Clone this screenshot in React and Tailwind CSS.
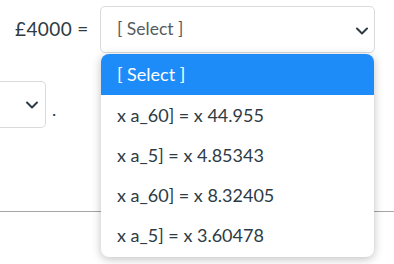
import { ChevronDown } from 'lucide-react'

const options = [
  'x a_60] = x 44.955',
  'x a_5] = x 4.85343',
  'x a_60] = x 8.32405',
  'x a_5] = x 3.60478',
]

export default function App() {
  return (
    <div className="relative h-[264px] w-[394px] overflow-hidden bg-white text-[#2d3b45]" style={{ fontFamily: 'Lato, "Noto Sans", sans-serif' }}>
      {/* top row */}
      <div className="flex items-center pt-[6px] pl-[15px]">
        <span className="w-[85px] text-[19px] tracking-[0.4px]">£4000 =</span>
        <div className="flex h-[47px] w-[275px] items-center justify-between rounded-[5px] border border-[#d7dbde] pl-[16px] pr-[2px]">
          <span className="text-[17.5px] text-[#555b60]">[ Select ]</span>
          <ChevronDown className="mt-[2px] h-[20px] w-[20px] text-[#2d3b45]" strokeWidth={2.4} />
        </div>
      </div>

      {/* second row, partly hidden */}
      <div className="mt-[28px] flex items-end">
        <div className="flex h-[47px] w-[46px] items-center justify-end rounded-r-[5px] border border-l-0 border-[#d7dbde] pr-[3px]">
          <ChevronDown className="h-[20px] w-[20px] text-[#2d3b45]" strokeWidth={2.4} />
        </div>
        <span className="ml-[6px] mb-[10px] text-[18px] leading-none">.</span>
      </div>

      {/* divider */}
      <div className="mt-[83px] h-px w-full bg-[#a5a5a5]" />

      {/* open menu */}
      <div className="absolute left-[101px] top-[54px] w-[273px] overflow-hidden rounded-[8px] bg-white pb-[2px] shadow-[0_2px_10px_rgba(0,0,0,0.25)]">
        <div className="flex h-[41px] items-center bg-[#1e8cf8] pl-[16px] text-[18px] text-white">[ Select ]</div>
        {options.map((o, i) => (
          <div key={i} className="flex h-[40px] items-center pl-[16px] text-[18px]">{o}</div>
        ))}
      </div>
    </div>
  )
}
